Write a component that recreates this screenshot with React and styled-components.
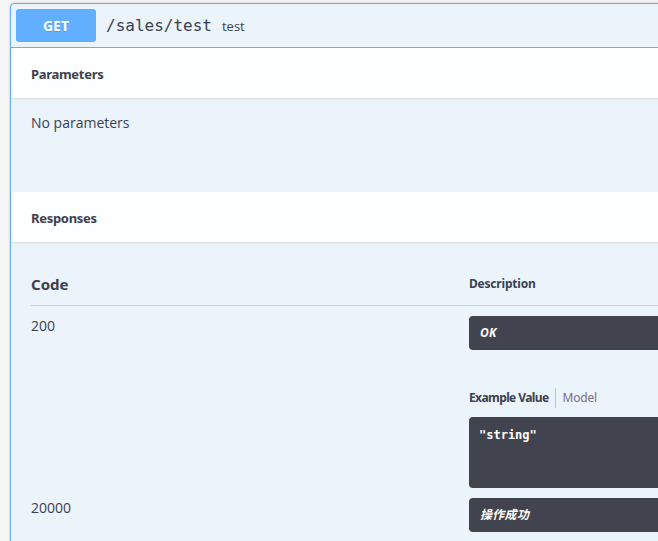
import React from "react";
import styled, { createGlobalStyle } from "styled-components";

const Global = createGlobalStyle`
  html, body {
    margin: 0;
    padding: 0;
    background: #f7f7f7;
    overflow: hidden;
  }
  body {
    font-family: "Open Sans", "Noto Sans", sans-serif;
    color: #3b4151;
  }
`;

const responses = [
  { code: "200", description: "OK", example: '"string"' },
  { code: "20000", description: "操作成功" },
];

export default function App() {
  return (
    <Page>
      <Global />
      <Opblock>
        <Summary>
          <Method>GET</Method>
          <Path>/sales/test</Path>
          <Summ>test</Summ>
        </Summary>
        <SectionHeader>
          <h4>Parameters</h4>
        </SectionHeader>
        <ParamsBody>No parameters</ParamsBody>
        <SectionHeader>
          <h4>Responses</h4>
        </SectionHeader>
        <ResponsesInner>
          <HeadRow>
            <CodeHead>Code</CodeHead>
            <DescHead>Description</DescHead>
          </HeadRow>
          {responses.map((r) => (
            <Row key={r.code}>
              <Status>{r.code}</Status>
              <Desc>
                <Markdown>{r.description}</Markdown>
                {r.example && (
                  <>
                    <Tabs>
                      <Tab active>Example Value</Tab>
                      <Tab>Model</Tab>
                    </Tabs>
                    <CodeBox>{r.example}</CodeBox>
                  </>
                )}
              </Desc>
            </Row>
          ))}
        </ResponsesInner>
      </Opblock>
    </Page>
  );
}

const Page = styled.div`
  padding: 3px 0 0 10px;
`;

const Opblock = styled.div`
  width: 720px;
  border: 1px solid #61affe;
  border-radius: 4px;
  background: #ebf3fb;
  box-shadow: 0 0 3px rgba(0, 0, 0, 0.19);
`;

const Summary = styled.div`
  display: flex;
  align-items: center;
  padding: 5px;
  border-bottom: 1px solid #61affe;
`;

const Method = styled.div`
  width: 80px;
  height: 33px;
  display: flex;
  align-items: center;
  justify-content: center;
  background: #61affe;
  border-radius: 3px;
  color: #fff;
  font-family: "Noto Sans", sans-serif;
  font-weight: 700;
  font-size: 14px;
  text-shadow: 0 1px 0 rgba(0, 0, 0, 0.1);
`;

const Path = styled.span`
  font-family: "DejaVu Sans Mono", monospace;
  font-size: 16px;
  color: #3b4151;
  padding: 0 10px;
`;

const Summ = styled.span`
  font-family: "Open Sans", sans-serif;
  font-size: 13px;
  color: #3b4151;
`;

const SectionHeader = styled.div`
  height: 50px;
  display: flex;
  align-items: center;
  padding: 0 20px;
  background: rgba(255, 255, 255, 0.85);
  box-shadow: 0 1px 2px rgba(0, 0, 0, 0.1);
  position: relative;

  h4 {
    margin: 0;
    padding-top: 2px;
    font-family: "Noto Sans", sans-serif;
    font-size: 13px;
    font-weight: 700;
    letter-spacing: -0.3px;
    color: #3b4151;
  }
`;

const ParamsBody = styled.div`
  height: 94px;
  box-sizing: border-box;
  padding: 14px 20px 0;
  font-size: 14px;
  line-height: 21px;
`;

const ResponsesInner = styled.div`
  padding: 20px 20px 40px;
`;

const HeadRow = styled.div`
  display: grid;
  grid-template-columns: 438px 1fr;
  align-items: center;
  height: 43px;
  border-bottom: 1px solid rgba(59, 65, 81, 0.2);
`;

const CodeHead = styled.div`
  font-family: "Noto Sans", sans-serif;
  font-size: 15px;
  font-weight: 700;
`;

const DescHead = styled.div`
  font-family: "Noto Sans", sans-serif;
  font-size: 12px;
  font-weight: 700;
  letter-spacing: -0.2px;
`;

const Row = styled.div`
  display: grid;
  grid-template-columns: 438px 1fr;
  padding-top: 10px;
`;

const Status = styled.div`
  font-size: 14px;
  line-height: 19px;
`;

const Desc = styled.div`
  display: flex;
  flex-direction: column;
`;

const Markdown = styled.div`
  background: #41444e;
  border-radius: 4px;
  color: #fff;
  padding: 10px 11px;
  font-family: "Noto Sans", "Noto Sans CJK SC", sans-serif;
  font-size: 12px;
  line-height: 14px;
  font-weight: 700;
  font-style: italic;
  letter-spacing: 0.3px;
`;

const Tabs = styled.div`
  display: flex;
  align-items: center;
  margin: 37px 0 8px;
  height: 22px;
`;

const Tab = styled.div`
  font-family: "Noto Sans", sans-serif;
  font-size: 12px;
  font-weight: ${(p) => (p.active ? 700 : 400)};
  letter-spacing: ${(p) => (p.active ? "-0.6px" : "-0.2px")};
  color: ${(p) => (p.active ? "#3b4151" : "#7a6e8e")};
  padding: ${(p) => (p.active ? "0 7px 0 0" : "0 0 0 6px")};
  border-right: ${(p) => (p.active ? "1px solid rgba(0,0,0,0.2)" : "none")};
  line-height: 20px;
`;

const CodeBox = styled.pre`
  margin: 0;
  min-height: 71px;
  box-sizing: border-box;
  background: #41444e;
  border-radius: 4px;
  color: #fff;
  padding: 11px 10px;
  font-family: "DejaVu Sans Mono", monospace;
  font-size: 12px;
  font-weight: 700;
  line-height: 14px;
`;
